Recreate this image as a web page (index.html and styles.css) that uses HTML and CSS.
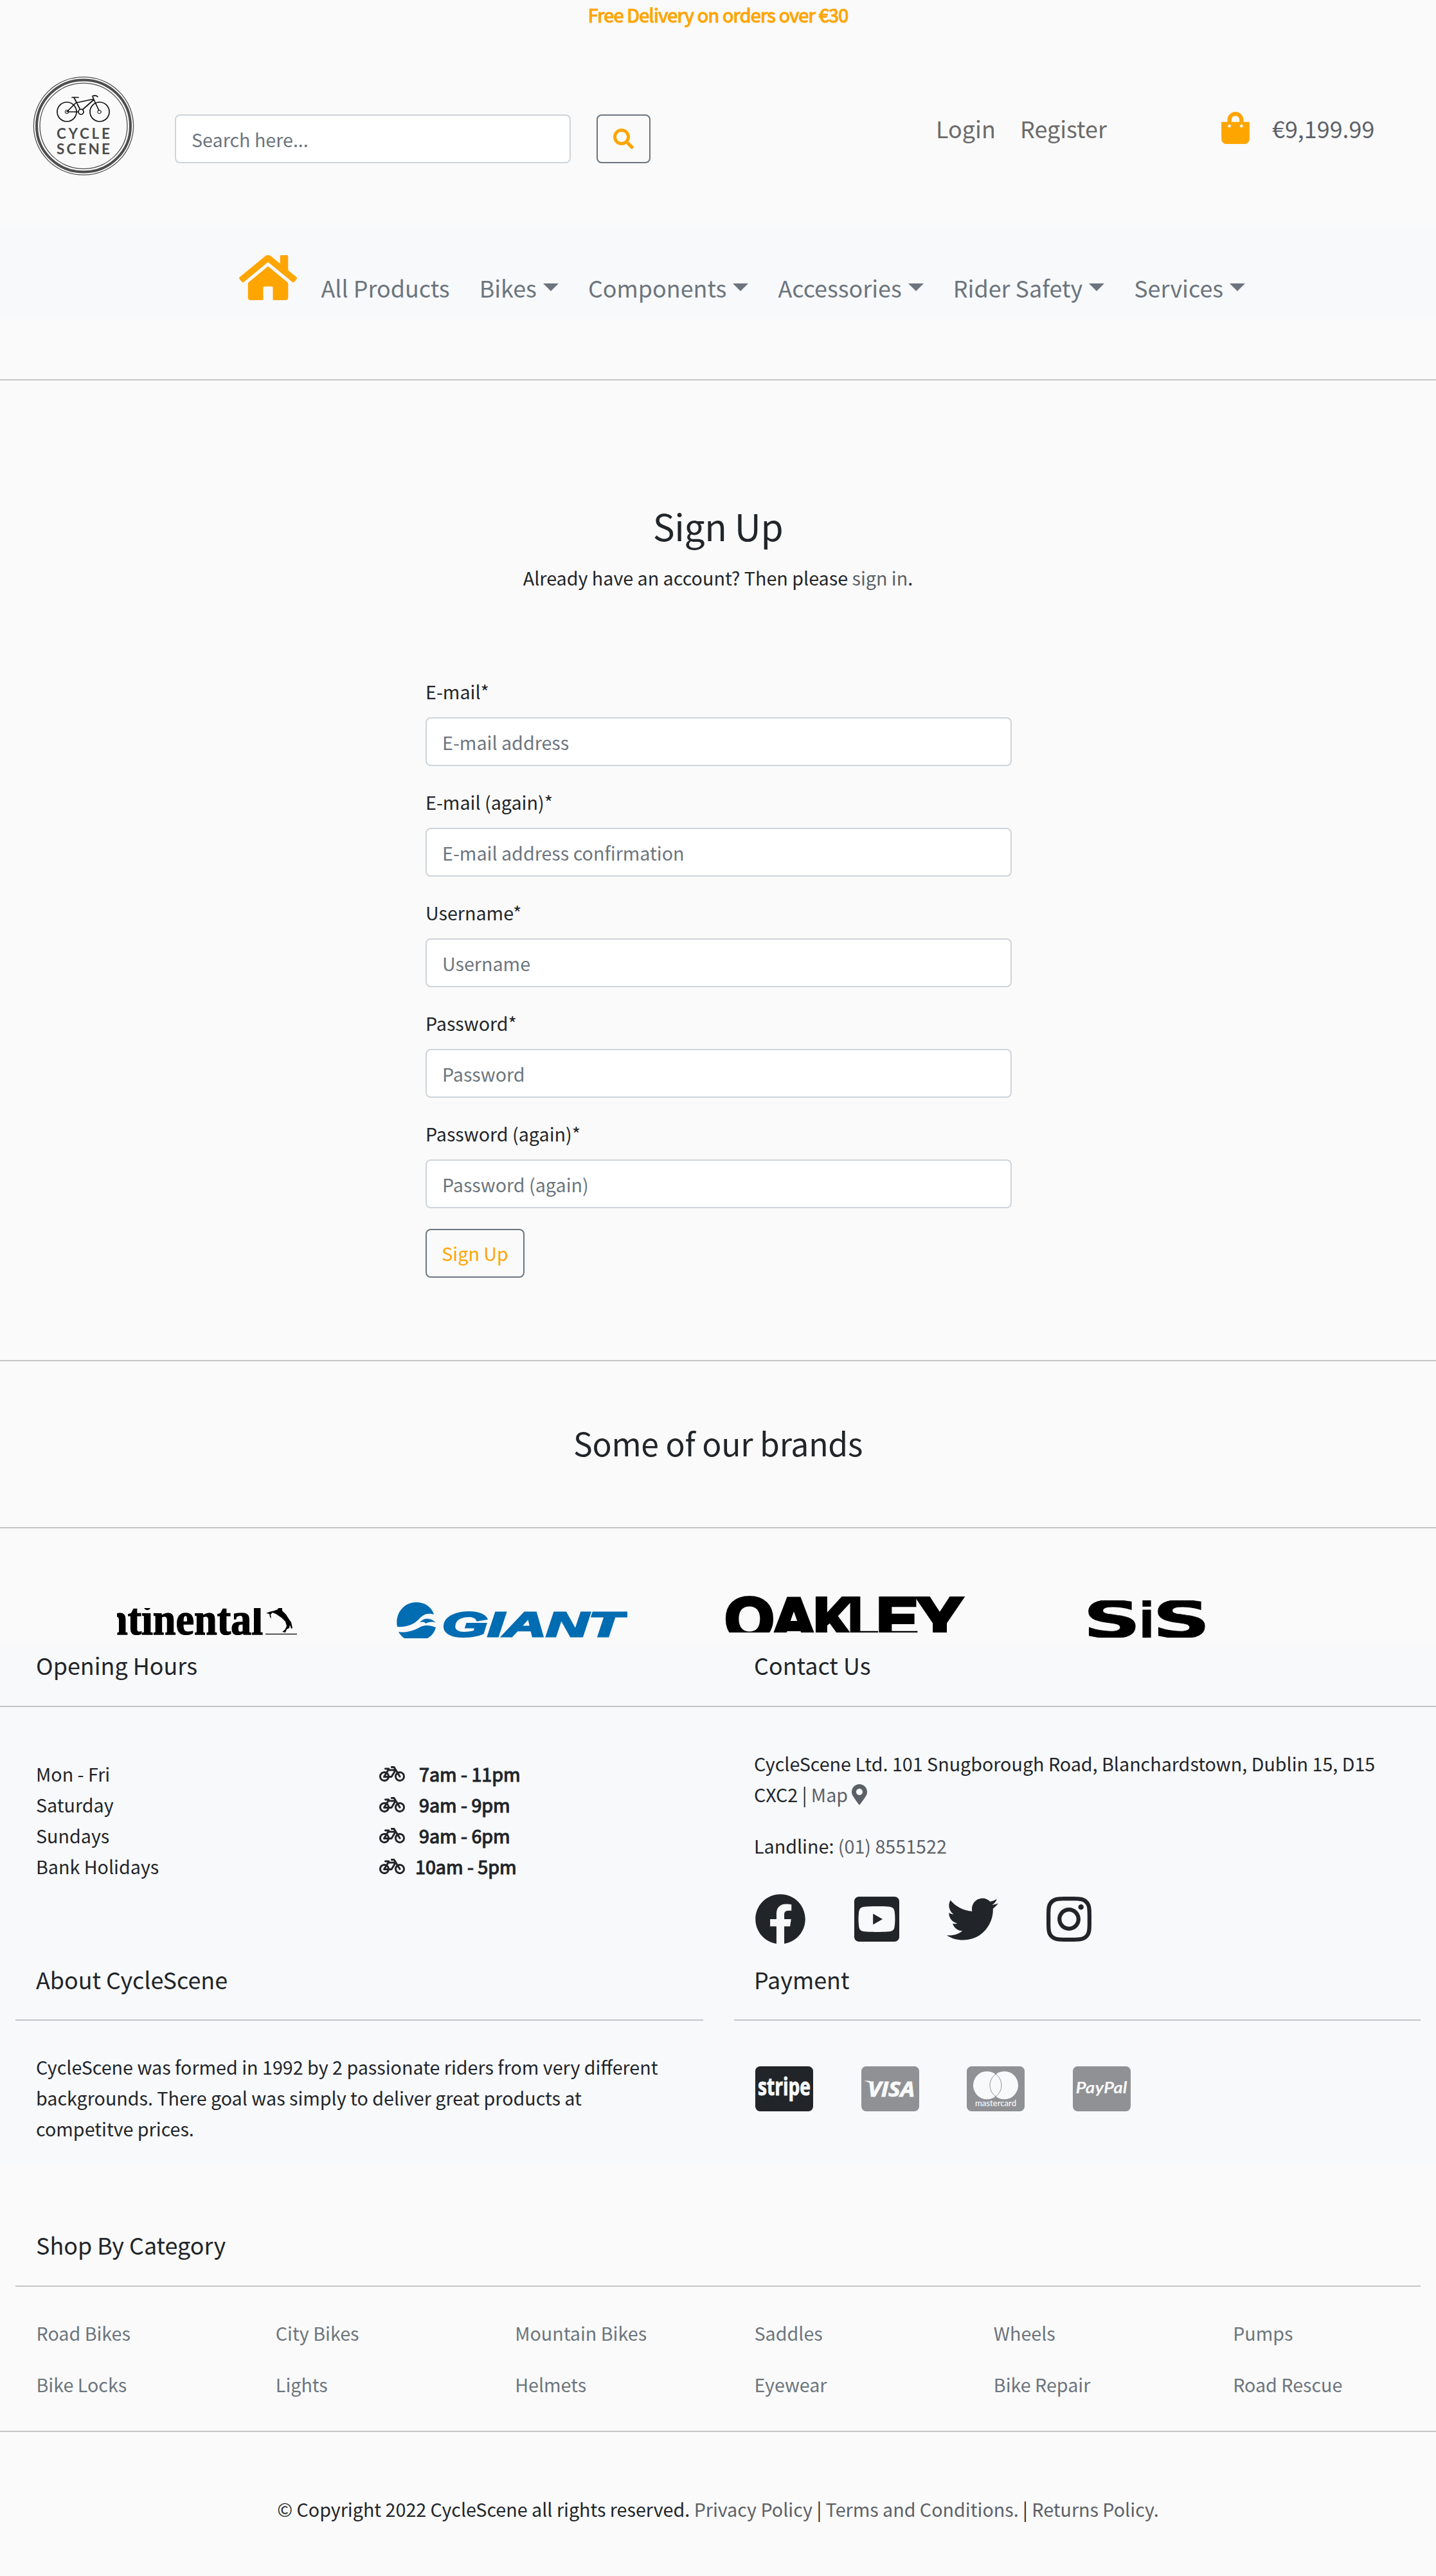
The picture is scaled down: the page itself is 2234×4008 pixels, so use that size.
FILE: index.html
```html
<!DOCTYPE html>
<html lang="en">
<head>
<meta charset="utf-8">
<title>CycleScene - Sign Up</title>
<link rel="stylesheet" href="styles.css">
</head>
<body>
<svg class="defs" width="0" height="0">
  <symbol id="bicycle" viewBox="0 0 640 512"><path d="M512.509 192.001c-16.373-.064-32.03 2.955-46.436 8.495l-77.68-125.153A24 24 0 0 0 368.001 64h-64c-8.837 0-16 7.163-16 16v16c0 8.837 7.163 16 16 16h50.649l14.896 24H256.002v-16c0-8.837-7.163-16-16-16h-87.459c-13.441 0-24.777 10.999-24.536 24.437.232 13.044 10.876 23.563 23.995 23.563h48.726l-29.417 47.52c-13.433-4.83-27.904-7.483-42.992-7.52C58.094 191.83.412 249.012.002 319.236-.413 390.279 57.055 448 128.002 448c59.642 0 109.758-40.793 123.967-96h52.033a24 24 0 0 0 20.406-11.367L410.37 201.77l14.938 24.067c-25.455 23.448-41.385 57.081-41.307 94.437.145 68.833 57.899 127.051 126.729 127.719 70.606.685 128.181-55.803 129.255-125.996 1.086-70.941-56.526-129.72-127.476-129.996zM186.75 265.772c9.727 10.529 16.673 23.661 19.642 38.228h-43.306l23.664-38.228zM128.002 400c-44.112 0-80-35.888-80-80s35.888-80 80-80c5.869 0 11.586.653 17.099 1.859l-45.505 73.509C89.715 331.327 101.213 352 120.002 352h81.3c-12.37 28.225-40.562 48-73.3 48zm162.63-96h-35.624c-3.96-31.756-19.556-59.894-42.383-80.026L237.371 184h127.547l-74.286 120zm217.057 95.886c-41.036-2.165-74.049-35.692-75.627-76.755-.812-21.121 6.633-40.518 19.335-55.263l44.433 71.586c4.66 7.508 14.524 9.816 22.032 5.156l13.594-8.437c7.508-4.66 9.817-14.524 5.156-22.032l-44.468-71.643a79.901 79.901 0 0 1 19.858-2.497c44.112 0 80 35.888 80 80-.001 45.54-38.252 82.316-84.313 79.885z"/></symbol>
</svg>

<div class="banner"><span>Free Delivery on orders over €30</span></div>

<header class="header">
  <svg class="logo" viewBox="0 0 158 154" width="158" height="154">
    <g fill="none" stroke="#4d4d4d">
      <ellipse cx="79" cy="77" rx="77.6" ry="76.2" stroke-width="1.3"/>
      <ellipse cx="79" cy="77" rx="73" ry="71.6" stroke-width="4"/>
      <ellipse cx="79" cy="77" rx="68" ry="66.6" stroke-width="1.3"/>
    </g>
    <g fill="none" stroke="#111" stroke-width="1.7" stroke-linecap="round" stroke-linejoin="round">
      <circle cx="53" cy="55" r="15"/><circle cx="104" cy="55" r="15"/>
      <circle cx="53" cy="55" r="2.8" stroke-width="1"/><circle cx="103.5" cy="55" r="2.8" stroke-width="1"/>
      <circle cx="75" cy="55" r="4"/>
      <path d="M53 55L67 41L93 35.5M71 55H55M73.5 51L64 32.5M61 32.500H71M77.500 51.500L95 36M95 36L103 53M95 36L93 30.500C96 29 99 29.500 101 31.500"/>
    </g>
    <g class="logo-text">
      <text x="37" y="96.5" textLength="83">CYCLE</text>
      <text x="37" y="120.5" textLength="83">SCENE</text>
    </g>
  </svg>
  <input class="field search" type="text" placeholder="Search here...">
  <button class="btn search-btn" aria-label="Search"><svg viewBox="0 0 512 512" width="32" height="32"><path d="M505 442.700L405.300 343c-4.500-4.500-10.600-7-17-7H372c27.600-35.300 44-79.700 44-128C416 93.100 322.900 0 208 0S0 93.100 0 208s93.100 208 208 208c48.300 0 92.700-16.400 128-44v16.300c0 6.400 2.500 12.500 7 17l99.700 99.700c9.400 9.400 24.600 9.400 33.900 0l28.300-28.300c9.400-9.400 9.400-24.600.1-34zM208 336c-70.700 0-128-57.200-128-128 0-70.700 57.200-128 128-128 70.700 0 128 57.200 128 128 0 70.700-57.200 128-128 128z"/></svg></button>
  <a class="account login">Login</a>
  <a class="account register">Register</a>
  <svg class="bag" viewBox="0 0 448 512" width="44" height="50"><path d="M352 160v-32C352 57.420 294.579 0 224 0 153.420 0 96 57.420 96 128v32H0v272c0 44.183 35.817 80 80 80h288c44.183 0 80-35.817 80-80V160h-96zm-192-32c0-35.290 28.710-64 64-64s64 28.710 64 64v32H160v-32zm160 120c-13.255 0-24-10.745-24-24s10.745-24 24-24 24 10.745 24 24-10.745 24-24 24zm-192 0c-13.255 0-24-10.745-24-24s10.745-24 24-24 24 10.745 24 24-10.745 24-24 24z"/></svg>
  <a class="account total">€9,199.99</a>
</header>

<nav class="nav">
  <svg class="home" viewBox="0 0 576 512" width="90" height="80"><path d="M488 312.700V456c0 13.300-10.700 24-24 24H348c-6.600 0-12-5.400-12-12V356c0-6.600-5.400-12-12-12h-72c-6.600 0-12 5.400-12 12v112c0 6.600-5.400 12-12 12H112c-13.300 0-24-10.700-24-24V312.700c0-3.600 1.600-7 4.400-9.300l188-154.800c4.400-3.600 10.800-3.600 15.300 0l188 154.800c2.700 2.300 4.300 5.700 4.300 9.300zm83.600-60.900L488 182.900V44.400c0-6.600-5.400-12-12-12h-56c-6.600 0-12 5.400-12 12V117l-89.500-73.700c-17.700-14.600-43.300-14.600-61 0L4.400 251.800c-5.100 4.200-5.800 11.800-1.600 16.900l25.500 31c4.200 5.100 11.800 5.800 16.900 1.600l235.200-193.700c4.400-3.600 10.800-3.600 15.300 0l235.200 193.700c5.100 4.200 12.700 3.500 16.900-1.600l25.500-31c4.200-5.200 3.400-12.700-1.700-16.900z"/></svg>
  <a>All Products</a>
  <a class="drop">Bikes</a>
  <a class="drop">Components</a>
  <a class="drop">Accessories</a>
  <a class="drop">Rider Safety</a>
  <a class="drop">Services</a>
</nav>

<main class="signup">
  <h1>Sign Up</h1>
  <p class="intro">Already have an account? Then please <a>sign in</a>.</p>
  <form class="form">
    <label>E-mail*<input class="field" type="text" placeholder="E-mail address"></label>
    <label>E-mail (again)*<input class="field" type="text" placeholder="E-mail address confirmation"></label>
    <label>Username*<input class="field" type="text" placeholder="Username"></label>
    <label>Password*<input class="field" type="password" placeholder="Password"></label>
    <label>Password (again)*<input class="field" type="password" placeholder="Password (again)"></label>
    <button class="btn submit" type="button">Sign Up</button>
  </form>
</main>

<section class="brands">
  <h2>Some of our brands</h2>
  <div class="brand-row">
    <svg class="continental" viewBox="0 0 280 42" width="280" height="42">
      <text x="-19" y="41" textLength="246" lengthAdjust="spacingAndGlyphs">ntinental</text>
      <path d="M231 40.500H280" stroke="#222" stroke-width="1.500"/>
      <path d="M245 4L250 2L251 0H257L257 4L263 10L268 18L271 22L273 31L271 32L269 26L268 31L264 33L262 38L257 37L261 34L264 28L262 21L256 15L247 9L242 7L239 10L240 16L238 14L237 9L232 8L237 6Z"/>
    </svg>
    <svg class="giant" viewBox="0 0 360 56" width="360" height="56">
      <path d="M2 38C-2 18 12 0 31 0C46 0 56 8 59 19C49 16 43 19 37 25C27 36 14 39 2 38ZM37 31C43 24 54 23 62 32C56 29 51 31 46 33C45 30 41 30 37 31ZM4 46C16 48 27 44 35 40C43 35 51 35 62 39C60 47 56 52 49 56H13C9 53 6 50 4 46Z"/>
      <text x="72" y="53" textLength="283" lengthAdjust="spacingAndGlyphs">GIANT</text>
    </svg>
    <svg class="oakley" viewBox="0 0 374 58" width="374" height="58">
      <text y="69"><tspan x="0" textLength="76" lengthAdjust="spacingAndGlyphs">O</tspan><tspan x="72" textLength="70" lengthAdjust="spacingAndGlyphs">A</tspan><tspan x="138" textLength="62" lengthAdjust="spacingAndGlyphs">K</tspan><tspan x="192" textLength="46" lengthAdjust="spacingAndGlyphs">L</tspan><tspan x="236" textLength="64" lengthAdjust="spacingAndGlyphs">E</tspan><tspan x="299" textLength="70" lengthAdjust="spacingAndGlyphs">Y</tspan></text>
    </svg>
    <svg class="sis" viewBox="0 0 188 58" width="188" height="58">
      <text y="58"><tspan x="-5" textLength="90" lengthAdjust="spacingAndGlyphs">S</tspan><tspan x="82" textLength="24" lengthAdjust="spacingAndGlyphs">i</tspan><tspan x="103" textLength="90" lengthAdjust="spacingAndGlyphs">S</tspan></text>
    </svg>
  </div>
</section>

<footer>
  <div class="info">
    <div class="titles"><h3>Opening Hours</h3><h3>Contact Us</h3></div>
    <div class="columns">
      <div class="hours">
        <span>Mon - Fri</span><span class="time"><svg width="40" height="32"><use href="#bicycle"/></svg><b>7am - 11pm</b></span>
        <span>Saturday</span><span class="time"><svg width="40" height="32"><use href="#bicycle"/></svg><b>9am - 9pm</b></span>
        <span>Sundays</span><span class="time"><svg width="40" height="32"><use href="#bicycle"/></svg><b>9am - 6pm</b></span>
        <span>Bank Holidays</span><span class="time late"><svg width="40" height="32"><use href="#bicycle"/></svg><b>10am - 5pm</b></span>
      </div>
      <div class="contact">
        <p>CycleScene Ltd. 101 Snugborough Road, Blanchardstown, Dublin 15, D15<br>CXC2 | <a>Map <svg class="pin" viewBox="0 0 384 512" width="24" height="32"><path d="M172.268 501.670C26.970 291.031 0 269.413 0 192 0 85.961 85.961 0 192 0s192 85.961 192 192c0 77.413-26.970 99.031-172.268 309.670-9.535 13.774-29.930 13.773-39.464 0zM192 272c44.183 0 80-35.817 80-80s-35.817-80-80-80-80 35.817-80 80 35.817 80 80 80z"/></svg></a></p>
        <p>Landline: <a>(01) 8551522</a></p>
        <div class="social">
          <svg viewBox="0 0 512 512" width="80" height="80"><path d="M504 256C504 119 393 8 256 8S8 119 8 256c0 123.780 90.690 226.380 209.250 245V327.690h-63V256h63v-54.640c0-62.150 37-96.480 93.670-96.480 27.140 0 55.520 4.840 55.520 4.840v61h-31.280c-30.800 0-40.410 19.120-40.410 38.730V256h68.780l-11 71.690h-57.780V501C413.310 482.380 504 379.780 504 256z"/></svg>
          <svg viewBox="0 0 448 512" width="70" height="80"><path d="M186.800 202.100l95.200 54.100-95.200 54.100V202.100zM448 80v352c0 26.500-21.500 48-48 48H48c-26.500 0-48-21.500-48-48V80c0-26.500 21.500-48 48-48h352c26.500 0 48 21.500 48 48zm-42 176.300s0-59.600-7.600-88.200c-4.200-15.800-16.500-28.200-32.200-32.400C337.900 128 224 128 224 128s-113.900 0-142.200 7.700c-15.700 4.200-28 16.600-32.200 32.400-7.600 28.500-7.600 88.200-7.600 88.200s0 59.600 7.600 88.200c4.200 15.800 16.500 27.700 32.200 31.900C110.100 384 224 384 224 384s113.900 0 142.200-7.700c15.700-4.200 28-16.100 32.200-31.900 7.600-28.500 7.600-88.100 7.600-88.100z"/></svg>
          <svg viewBox="0 0 512 512" width="80" height="80"><path d="M459.370 151.716c.325 4.548.325 9.097.325 13.645 0 138.720-105.583 298.558-298.558 298.558-59.452 0-114.680-17.219-161.137-47.106 8.447.974 16.568 1.299 25.340 1.299 49.055 0 94.213-16.568 130.274-44.832-46.132-.975-84.792-31.188-98.112-72.772 6.498.974 12.995 1.624 19.818 1.624 9.421 0 18.843-1.300 27.614-3.573-48.081-9.747-84.143-51.980-84.143-102.985v-1.299c13.969 7.797 30.214 12.670 47.431 13.319-28.264-18.843-46.781-51.005-46.781-87.391 0-19.492 5.197-37.360 14.294-52.954 51.655 63.675 129.300 105.258 216.365 109.807-1.624-7.797-2.599-15.918-2.599-24.040 0-57.828 46.782-104.934 104.934-104.934 30.213 0 57.502 12.670 76.670 33.137 23.715-4.548 46.456-13.320 66.599-25.340-7.798 24.366-24.366 44.833-46.132 57.827 21.117-2.273 41.584-8.122 60.426-16.243-14.292 20.791-32.161 39.308-52.628 54.253z"/></svg>
          <svg viewBox="0 0 448 512" width="70" height="80"><path d="M224.100 141c-63.600 0-114.900 51.300-114.900 114.900s51.300 114.900 114.900 114.900S339 319.500 339 255.900 287.700 141 224.100 141zm0 189.600c-41.100 0-74.700-33.500-74.700-74.700s33.500-74.700 74.700-74.700 74.700 33.500 74.700 74.700-33.600 74.700-74.700 74.700zm146.400-194.300c0 14.900-12 26.800-26.800 26.800-14.900 0-26.800-12-26.800-26.800s12-26.800 26.800-26.800 26.800 12 26.800 26.800zm76.100 27.200c-1.700-35.900-9.900-67.700-36.200-93.900-26.200-26.200-58-34.400-93.900-36.200-37-2.100-147.900-2.100-184.900 0-35.800 1.700-67.600 9.900-93.900 36.100s-34.400 58-36.200 93.900c-2.100 37-2.100 147.900 0 184.900 1.700 35.900 9.900 67.700 36.200 93.900s58 34.400 93.900 36.200c37 2.100 147.900 2.100 184.900 0 35.900-1.700 67.700-9.900 93.900-36.200 26.200-26.200 34.400-58 36.200-93.900 2.100-37 2.100-147.800 0-184.800zM398.800 388c-7.800 19.600-22.900 34.700-42.600 42.600-29.500 11.700-99.500 9-132.100 9s-102.700 2.600-132.100-9c-19.600-7.800-34.700-22.900-42.600-42.600-11.700-29.500-9-99.500-9-132.100s-2.600-102.700 9-132.100c7.800-19.600 22.900-34.700 42.600-42.600 29.500-11.700 99.500-9 132.100-9s102.700-2.600 132.100 9c19.600 7.800 34.700 22.900 42.600 42.600 11.700 29.500 9 99.500 9 132.100s2.700 102.700-9 132.100z"/></svg>
        </div>
      </div>
    </div>
    <div class="titles second"><h3>About CycleScene</h3><h3>Payment</h3></div>
    <div class="rules"><i></i><i></i></div>
    <div class="columns bottom">
      <p class="about">CycleScene was formed in 1992 by 2 passionate riders from very different<br>backgrounds. There goal was simply to deliver great products at<br>competitve prices.</p>
      <div class="payment">
        <svg class="stripe" viewBox="0 0 90 70" width="90" height="70"><rect width="90" height="70" rx="7.5"/><text x="4" y="44.5" textLength="82" lengthAdjust="spacingAndGlyphs">stripe</text></svg>
        <svg class="visa" viewBox="0 0 90 70" width="90" height="70"><rect width="90" height="70" rx="7.5"/><path class="ink" d="M5 22.500H13L14 27C11 24.500 8 23.500 5 23Z"/><text x="10" y="47" textLength="73" lengthAdjust="spacingAndGlyphs">VISA</text></svg>
        <svg class="mastercard" viewBox="0 0 90 70" width="90" height="70"><rect width="90" height="70" rx="7.5"/><ellipse class="ink" cx="31.5" cy="29.5" rx="21.5" ry="21.8"/><ellipse class="ink" cx="58.5" cy="29.5" rx="21.5" ry="21.8"/><path d="M45 12C33 21 33 38 45 47C57 38 57 21 45 12Z"/><text x="13" y="62" textLength="64" lengthAdjust="spacingAndGlyphs">mastercard</text></svg>
        <svg class="paypal" viewBox="0 0 90 70" width="90" height="70"><rect width="90" height="70" rx="7.5"/><text x="4.5" y="42" textLength="80" lengthAdjust="spacingAndGlyphs">PayPal</text></svg>
      </div>
    </div>
  </div>

  <h3 class="shop-title">Shop By Category</h3>
  <div class="shop">
    <a>Road Bikes</a><a>City Bikes</a><a>Mountain Bikes</a><a>Saddles</a><a>Wheels</a><a>Pumps</a>
    <a>Bike Locks</a><a>Lights</a><a>Helmets</a><a>Eyewear</a><a>Bike Repair</a><a>Road Rescue</a>
  </div>
  <p class="legal">© Copyright 2022 CycleScene all rights reserved. <a>Privacy Policy</a> | <a>Terms and Conditions.</a> | <a>Returns Policy.</a></p>
</footer>
</body>
</html>
```
FILE: styles.css
```css
* { box-sizing: border-box; }
body {
  margin: 0;
  background: #fafafa;
  color: #212529;
  font-family: "Noto Sans CJK JP", "Open Sans", sans-serif;
  font-size: 28.68px;
  line-height: 48px;
}
h1, h2, h3, p { margin: 0; font-weight: 400; }
a { color: #5c6168; }
svg { display: block; flex: none; }
.defs { position: absolute; }

.banner { height: 48px; line-height: 46px; text-align: center; color: #ffa500; letter-spacing: -0.7px; -webkit-text-stroke: 1.2px #ffa500; }

.header { height: 304px; display: flex; align-items: flex-start; padding-left: 51px; }
.logo { margin-top: 70.5px; }
.logo-text { font-family: Lato, sans-serif; font-weight: 700; font-size: 22.5px; fill: #4d4d4d; }
.field {
  display: block;
  height: 76px;
  padding: 0 24px;
  border: 2px solid #ced4da;
  border-radius: 8px;
  background: #fff;
  font: inherit;
}
.field::placeholder { color: #6c757d; opacity: 1; }
.search { margin: 130px 0 0 63px; width: 616px; }
.btn {
  height: 76px;
  border: 2px solid #6c757d;
  border-radius: 8px;
  background: transparent;
  color: #ffa500;
  font: inherit;
  display: flex;
  align-items: center;
  justify-content: center;
  padding: 0;
}
.btn svg, .bag, .home { fill: #ffa500; }
.search-btn { width: 84px; margin: 130px 0 0 40px; }
.account { font-size: 35.9px; line-height: 60px; margin-top: 121px; color: #6b6b6b; white-space: nowrap; }
.login { margin-left: 444px; width: 131px; }
.register { width: 313px; }
.bag { margin-top: 126px; }
.total { margin-left: 35px; color: #5c6168; }

.nav { height: 143px; background: #f8f9fb; display: flex; padding: 40px 0 0 372px; font-size: 35.9px; line-height: 60px; }
.nav a { color: #6c757d; margin: 25px 46px 0 0; white-space: nowrap; }
.nav .home { margin-right: 37.5px; }
.drop::after { content: ""; display: inline-block; margin-left: 10px; vertical-align: 10px; border: 12px solid transparent; border-top-color: #6c757d; border-bottom: 0; }

.signup { margin-top: 95px; border-top: 2px solid #c4c5c6; height: 1526px; padding-top: 187px; text-align: center; }
.signup h1 { font-size: 56.9px; line-height: 76px; letter-spacing: -0.4px; }
.intro { margin-top: 20px; }
.form { width: 912px; margin: 129px 0 0 662px; text-align: left; }
.form label { display: block; height: 172px; }
.form .field { width: 912px; margin-top: 16px; }
.submit { width: 154px; }

.brands { border-top: 2px solid #c4c5c6; height: 445px; text-align: center; }
.brands h2 { font-size: 49.9px; line-height: 68px; padding-top: 92px; height: 258px; letter-spacing: -0.3px; }
.brand-row { border-top: 2px solid #c4c5c6; display: flex; align-items: flex-start; padding-left: 182px; }
.brand-row svg { overflow: hidden; }
.continental { margin-top: 124px; }
.continental text { font: bold 70px "Liberation Serif", serif; stroke: #000; stroke-width: 1.5px; }
.giant { margin: 115px 0 0 154px; fill: #006cb2; }
.giant text { font: italic bold 54px "Liberation Sans", sans-serif; stroke: #006cb2; stroke-width: 3px; }
.oakley { margin: 104px 0 0 152px; }
.oakley text { font: bold 92px "Liberation Sans", sans-serif; stroke: #000; stroke-width: 6px; }
.sis { margin: 112px 0 0 188px; }
.sis text { font: bold 78px "DejaVu Sans", sans-serif; stroke: #000; stroke-width: 1px; }

.info { background: #f8f9fb; height: 806px; padding-top: 5px; }
h3 { font-size: 35.9px; line-height: 48px; }
.titles { display: grid; grid-template-columns: 1fr 1fr; height: 88px; }
.titles h3 { padding-left: 56px; }
.columns { display: grid; grid-template-columns: 1fr 1fr; border-top: 2px solid #c4c5c6; height: 401px; }
.hours { display: grid; grid-template-columns: 534px 1fr; grid-auto-rows: 48px; padding: 80px 0 0 56px; }
.time { display: flex; align-items: center; gap: 22px; }
.time.late { gap: 16px; }
.time b { font-weight: 400; -webkit-text-stroke: 1.2px #212529; }
.time svg { fill: #212529; }
.contact { padding: 64px 0 0 56px; }
.contact p { margin-bottom: 32px; white-space: nowrap; }
.pin { display: inline-block; vertical-align: -4px; fill: #5c6168; }
.social { display: flex; gap: 74.6px; margin: 50px 0 0 1px; fill: #212529; }
.second { height: 87px; }
.rules { display: grid; grid-template-columns: 1118px 1116px; }
.rules i { margin: 0 24px; height: 2px; background: #c4c5c6; }
.bottom { border: 0; height: auto; }
.about { padding: 48px 0 0 56px; white-space: nowrap; }
.payment { display: flex; gap: 74.6px; padding: 71px 0 0 58px; }
.payment rect, .payment path { fill: #909194; }
.payment .stripe rect { fill: #212529; }
.payment text, .payment .ink { fill: #f8f9fb; }
.stripe text { font: bold 38px "Open Sans", sans-serif; stroke: #f8f9fb; }
.visa text { font: italic bold 33px "Open Sans", sans-serif; stroke: #f8f9fb; }
.mastercard text { font: 500 13px Lato, sans-serif; }
.mastercard path { stroke: #909194; fill: #f8f9fb; }
.paypal text { font: italic bold 24px Lato, sans-serif; }

.shop-title { margin: 101px 24px 0; padding-left: 32px; height: 90px; border-bottom: 2px solid #c4c5c6; }
.shop { display: grid; grid-template-columns: repeat(6, 372.33px); grid-auto-rows: 80px; padding: 48px 0 0 56.5px; height: 224px; }
.shop a { color: #6c757d; }
.legal { border-top: 2px solid #c4c5c6; height: 226px; padding-top: 96px; text-align: center; }
```
